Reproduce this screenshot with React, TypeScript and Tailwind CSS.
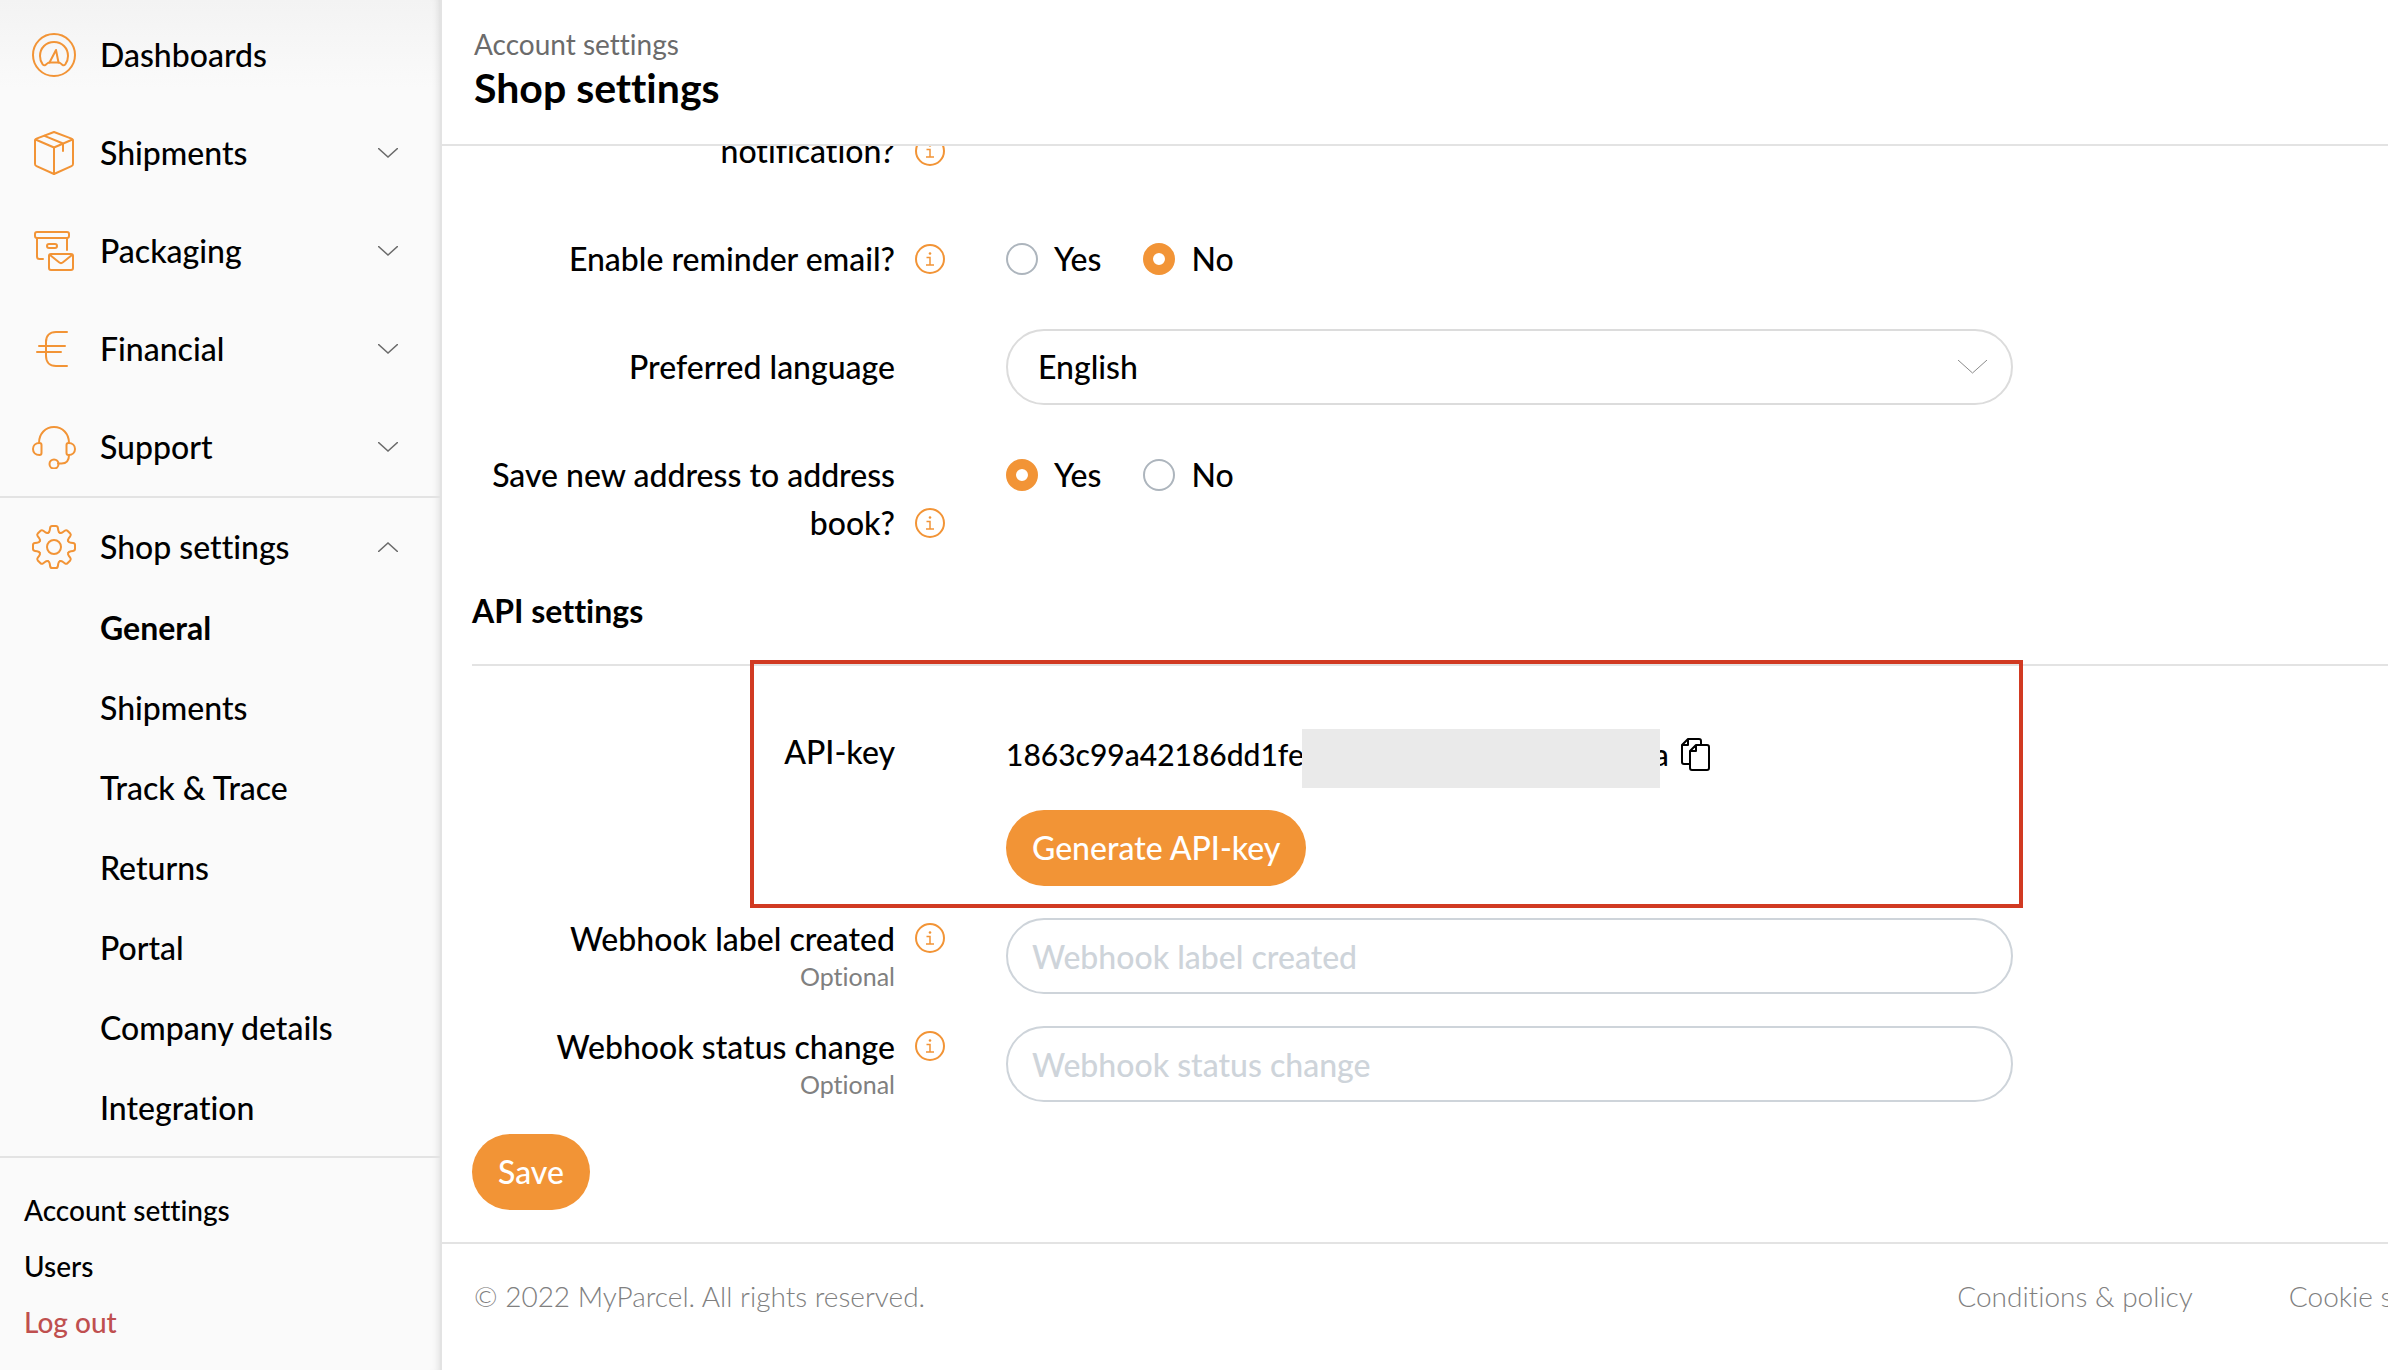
import { useState } from "react";
import type { ReactNode } from "react";

const DashboardIcon = () => (
  <>
    <circle cx="22" cy="22" r="21" />
    <path d="M17.500 29.500c-2 0-2.500 1.500-4 2.500-1 .600-2 .300-2.800-.600C8.800 29 8 26.500 8 23 8 15 14 9 22 9s14 6 14 14c0 3.500-.800 6-2.700 8.400-.800.900-1.800 1.200-2.800.600-1.500-1-2-2.500-4-2.500z" />
    <path d="M24 17l-6.500 12.500M24 17l2.500 12.500" />
  </>
);

const BoxIcon = () => (
  <>
    <path d="M22 1l17.500 6.600q1.500.600 1.500 2V33q0 1.500-1.500 2.100L22 43 4.500 35.100Q3 34.500 3 33V9.600q0-1.400 1.500-2z" />
    <path d="M3.500 8.500L22 16.500l18.500-8M22 16.500V43M12.500 4.800L31 12.500V20" />
  </>
);

const PackagingIcon = () => (
  <>
    <rect x="3" y="3" width="34" height="6" rx="2" />
    <path d="M5 9v18.500Q5 30 7.500 30H11M35 9v12" />
    <rect x="15" y="15" width="10" height="4" rx="2" />
    <rect x="17" y="25" width="24" height="16" rx="2" />
    <path d="M18 26l9 7.300q2 1.600 4 0l9-7.300" />
  </>
);

const EuroIcon = () => (
  <path d="M35 5H24C17.500 5 14 9 14 15v14c0 6 3.500 10 10 10h11M7 19h26M5 25h24" />
);

const HeadsetIcon = () => (
  <>
    <path d="M7 18C7 8.500 13.500 2 22 2s15 6.500 15 16" />
    <path d="M9.500 20v8q0 2-2 2C3.500 30 1 27.500 1 24s2.500-6 6.500-6q2 0 2 2z" />
    <path d="M34.500 20v8q0 2 2 2c4 0 6.500-2.500 6.500-6s-2.500-6-6.500-6q-2 0-2 2z" />
    <path d="M37 30c0 6-3 8.500-7.500 8.500H26" />
    <circle cx="22" cy="39" r="4.500" />
  </>
);

const GearIcon = () => (
  <>
    <g transform="translate(22 22)">
      {[0, 45, 90, 135, 180, 225, 270, 315].map((angle) => (
        <path
          key={angle}
          transform={`rotate(${angle})`}
          d="M-5.900-14.200C-4.600-14.600-4.400-15.600-4.200-17L-3.900-19Q-3.600-21-2-21H2Q3.600-21 3.900-19L4.200-17C4.400-15.600 4.600-14.600 5.900-14.200"
        />
      ))}
    </g>
    <circle cx="22" cy="22" r="7" />
  </>
);

const MenuIcon = ({ children }: { children: ReactNode }) => (
  <svg
    viewBox="0 0 44 44"
    className="size-11 shrink-0"
    fill="none"
    stroke="#f29436"
    strokeWidth="2"
    strokeLinecap="round"
    strokeLinejoin="round"
    aria-hidden="true"
  >
    {children}
  </svg>
);

const Chevron = ({ up = false }: { up?: boolean }) => (
  <svg
    viewBox="0 0 20 10"
    className="ml-auto h-2.5 w-5"
    fill="none"
    stroke="#6b6b6b"
    strokeWidth="1.500"
    aria-hidden="true"
  >
    <path d={up ? "M0 10L10 1l10 9" : "M0 0l10 9 10-9"} />
  </svg>
);

const InfoButton = ({ about }: { about: string }) => (
  <button type="button" aria-label={`More about ${about}`} className="block">
    <svg
      viewBox="0 0 30 30"
      className="size-[30px]"
      fill="none"
      stroke="#f29436"
      aria-hidden="true"
    >
      <circle cx="15" cy="15" r="14" strokeWidth="2" />
      <path d="M11.500 13.500H15V21M11 21h8" strokeWidth="1.500" />
      <circle cx="15" cy="9.500" r="1.300" fill="#f29436" stroke="none" />
    </svg>
  </button>
);

const menu = [
  { label: "Dashboards", icon: <DashboardIcon />, expandable: false },
  { label: "Shipments", icon: <BoxIcon />, expandable: true },
  { label: "Packaging", icon: <PackagingIcon />, expandable: true },
  { label: "Financial", icon: <EuroIcon />, expandable: true },
  { label: "Support", icon: <HeadsetIcon />, expandable: true },
];

const shopMenu = [
  "General",
  "Shipments",
  "Track & Trace",
  "Returns",
  "Portal",
  "Company details",
  "Integration",
];

const Sidebar = () => (
  <aside className="w-[442px] shrink-0 border-r-2 border-[#e3e3e3] bg-[#fafafa] bg-[linear-gradient(#f3f3f3,#fafafa_88px)] shadow-[inset_-8px_0_8px_-8px_rgba(0,0,0,0.15)]">
    <nav aria-label="Main">
      <div className="border-b-2 border-[#e3e3e3] pt-1.5">
        {menu.map((item) => (
          <button
            key={item.label}
            type="button"
            className="flex h-[98px] w-full items-center gap-6 pr-[42px] pl-8 text-left"
          >
            <MenuIcon>{item.icon}</MenuIcon>
            {item.label}
            {item.expandable && <Chevron />}
          </button>
        ))}
      </div>
      <div className="border-b-2 border-[#e3e3e3] py-2">
        <button
          type="button"
          aria-expanded="true"
          className="flex h-[82px] w-full items-center gap-6 pr-[42px] pl-8 text-left"
        >
          <MenuIcon>
            <GearIcon />
          </MenuIcon>
          Shop settings
          <Chevron up />
        </button>
        <ul>
          {shopMenu.map((label) => (
            <li key={label}>
              <a
                href="#"
                className={`flex h-20 items-center pl-[100px] ${label === "General" ? "font-bold" : ""}`}
              >
                {label}
              </a>
            </li>
          ))}
        </ul>
      </div>
      <ul className="pt-6 text-[28px]">
        <li>
          <a href="#" className="flex h-14 items-center pl-6">
            Account settings
          </a>
        </li>
        <li>
          <a href="#" className="flex h-14 items-center pl-6">
            Users
          </a>
        </li>
        <li>
          <a href="#" className="flex h-14 items-center pl-6 text-[#bf4f4f]">
            Log out
          </a>
        </li>
      </ul>
    </nav>
  </aside>
);

const rowClass = "grid grid-cols-[423px_111px_minmax(0,1007px)]";

interface YesNoProps {
  name: string;
  label: string;
  value: boolean;
  onChange: (value: boolean) => void;
}

const YesNoRow = ({ name, label, value, onChange }: YesNoProps) => (
  <div role="radiogroup" aria-labelledby={`${name}-label`} className={rowClass}>
    <span id={`${name}-label`} className="py-3.5 text-right leading-[48px]">
      {label}
    </span>
    <div className="self-end py-[23px] pl-5">
      <InfoButton about={label} />
    </div>
    <div className="flex h-[76px] items-center gap-[42px]">
      {[true, false].map((option) => (
        <label key={String(option)} className="flex items-center gap-4">
          <input
            type="radio"
            name={name}
            checked={value === option}
            onChange={() => onChange(option)}
            className="size-8 appearance-none rounded-full border-2 border-[#adb5bd] bg-white checked:border-[10px] checked:border-[#f29436]"
          />
          {option ? "Yes" : "No"}
        </label>
      ))}
    </div>
  </div>
);

const WebhookRow = ({ id, label }: { id: string; label: string }) => (
  <div className={rowClass}>
    <label htmlFor={id} className="text-right leading-[42px]">
      {label}
      <span className="block text-[25px] leading-8 font-normal text-[#808080]">
        Optional
      </span>
    </label>
    <div className="pt-[5px] pl-5">
      <InfoButton about={label} />
    </div>
    <input
      id={id}
      type="text"
      placeholder={label}
      className="h-[76px] w-full rounded-full border-2 border-[#ced4da] px-6 placeholder:text-[#ced4da]"
    />
  </div>
);

const App: React.FC = () => {
  const [reminder, setReminder] = useState(false);
  const [saveAddress, setSaveAddress] = useState(true);

  return (
    <div className="flex min-h-screen overflow-hidden bg-white font-[Lato,sans-serif] text-[32px] leading-9 font-medium text-black [font-variant-ligatures:none]">
      <Sidebar />

      <div className="flex min-w-0 flex-1 flex-col">
        <header className="border-b-2 border-[#e3e3e3] px-8 pt-[26px] pb-[34px]">
          <p className="text-[28px] font-normal text-[#6b6b6b]">
            Account settings
          </p>
          <h1 className="pt-1 text-[41px] leading-[44px] font-bold">
            Shop settings
          </h1>
        </header>

        <main className="overflow-hidden pl-[30px]">
          <form
            className="flex flex-col gap-8 pb-8"
            onSubmit={(e) => e.preventDefault()}
          >
            {/* scrolled halfway under the header */}
            <div className={`${rowClass} -mt-[19px]`}>
              <span className="pb-3.5 text-right leading-[48px]">
                notification?
              </span>
              <div className="pt-[9px] pl-5">
                <InfoButton about="notification" />
              </div>
            </div>

            <YesNoRow
              name="reminder"
              label="Enable reminder email?"
              value={reminder}
              onChange={setReminder}
            />

            <div className={rowClass}>
              <label
                htmlFor="language"
                className="py-3.5 text-right leading-[48px]"
              >
                Preferred language
              </label>
              <div className="relative col-start-3">
                <select
                  id="language"
                  className="h-[76px] w-full appearance-none rounded-full border-2 border-[#dcdcdc] bg-white px-[30px]"
                >
                  <option>English</option>
                  <option>Nederlands</option>
                </select>
                <svg
                  viewBox="0 0 29 14"
                  className="pointer-events-none absolute top-[31px] right-[26px] h-3.5 w-[29px]"
                  fill="none"
                  stroke="#8a8a8a"
                  aria-hidden="true"
                >
                  <path d="M0 0l14.500 13L29 0" />
                </svg>
              </div>
            </div>

            <YesNoRow
              name="address"
              label="Save new address to address book?"
              value={saveAddress}
              onChange={setSaveAddress}
            />

            <section className="flex flex-col gap-8">
              <h2 className="mb-4 border-b-2 border-[#e3e3e3] pb-[35px] font-bold">
                API settings
              </h2>

              <div className={`${rowClass} relative max-w-[1541px]`}>
                <span className="py-3.5 text-right leading-[48px]">
                  API-key
                </span>
                <div className="col-start-3 pt-2.5">
                  <div className="flex h-[60px] items-center text-[30px]">
                    <span>1863c99a42186dd1fe</span>
                    <span className="relative mt-2 -mr-1.5 -ml-0.5 h-[59px] w-[358px] bg-[#eaeaea]" />
                    <span>a</span>
                    <button
                      type="button"
                      aria-label="Copy API-key"
                      className="ml-3"
                    >
                      <svg
                        viewBox="0 0 30 34"
                        className="h-[34px] w-[30px]"
                        fill="none"
                        stroke="black"
                        strokeWidth="2"
                        strokeLinejoin="round"
                        aria-hidden="true"
                      >
                        <path d="M9 27H3q-2 0-2-2V8l6-6h11q2 0 2 2v4M7 2v6H1" />
                        <path d="M15 8h11q2 0 2 2v21q0 2-2 2H11q-2 0-2-2V14zM15 8v6H9" />
                      </svg>
                    </button>
                  </div>
                  <button
                    type="button"
                    className="mt-[26px] h-[76px] rounded-full bg-[#f29436] px-[26px] text-white"
                  >
                    Generate API-key
                  </button>
                </div>
                <div className="pointer-events-none absolute -top-[54px] -right-2.5 -bottom-[22px] left-[278px] border-4 border-[#d13a22]" />
              </div>

              <WebhookRow id="webhook-label" label="Webhook label created" />
              <WebhookRow id="webhook-status" label="Webhook status change" />
            </section>

            <button
              type="submit"
              className="h-[76px] self-start rounded-full bg-[#f29436] px-[26px] text-white"
            >
              Save
            </button>
          </form>
        </main>

        <footer className="flex justify-between overflow-hidden border-t-2 border-[#e3e3e3] pt-[34px] pl-8 text-[28px] font-light whitespace-nowrap text-[#808080]">
          <p>© 2022 MyParcel. All rights reserved.</p>
          <nav aria-label="Legal" className="-mr-[86px] flex gap-24">
            <a href="#">Conditions &amp; policy</a>
            <a href="#">Cookie settings</a>
          </nav>
        </footer>
      </div>
    </div>
  );
};

export default App;
